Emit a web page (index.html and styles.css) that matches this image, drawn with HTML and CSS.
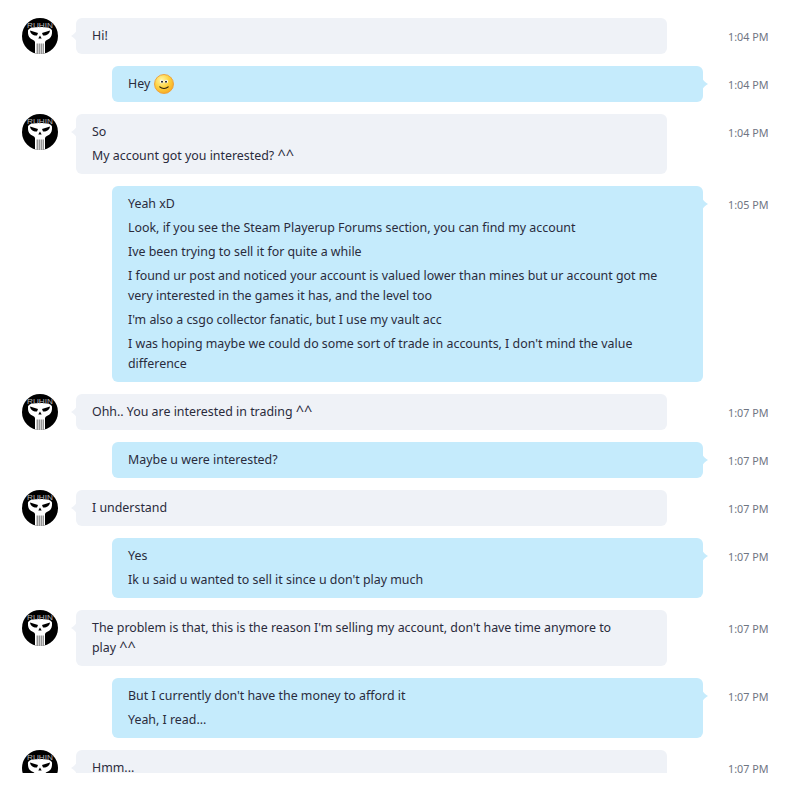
FILE: index.html
```html
<!DOCTYPE html>
<html lang="en">
<head>
<meta charset="utf-8">
<title>Chat</title>
<link rel="stylesheet" href="styles.css">
</head>
<body>
<svg class="defs" width="0" height="0" aria-hidden="true">
  <defs>
    <clipPath id="round"><circle cx="18" cy="18" r="18"/></clipPath>
    <symbol id="avatar" viewBox="0 0 36 36">
      <g clip-path="url(#round)">
        <rect width="36" height="36" fill="#000"/>
        <path d="M6 12.500C6.500 10 11 9 18 9s11.500 1 12 3.500c.3 3.500-.5 6.500-2.500 8-1.500 1.200-4 1.500-4.500 3.500v12H13V24c-.5-2-3-2.300-4.500-3.500-2-1.500-2.800-4.500-2.500-8z" fill="#fff"/>
        <path d="M8 12.500l8 2.500-1 2.500c-3.500.3-6.500-1.200-7-5zM28 12.500l-8 2.500 1 2.500c3.500.3 6.500-1.200 7-5z" fill="#000"/>
        <path d="M18 17.500l-1.700 3h3.400z" fill="#000"/>
        <path d="M15.200 25.500V36M17.200 25.500V36M19.200 25.500V36M21.200 25.500V36" stroke="#555" stroke-width=".9"/>
        <text x="18" y="9.500" class="avatar-text" textLength="26" lengthAdjust="spacingAndGlyphs">RUHIN</text>
      </g>
    </symbol>
    <radialGradient id="smile" cx=".38" cy=".3" r=".8">
      <stop offset="0" stop-color="#fff6a8"/>
      <stop offset=".5" stop-color="#fdd23f"/>
      <stop offset="1" stop-color="#f7a41f"/>
    </radialGradient>
  </defs>
</svg>
<main class="chat">
  <div class="row in">
    <svg class="avatar"><use href="#avatar"/></svg>
    <div class="bubble"><p>Hi!</p></div>
    <time>1:04 PM</time>
  </div>
  <div class="row out">
    <div class="bubble"><p>Hey <svg class="emoji" viewBox="0 0 20 20"><circle cx="10" cy="10" r="9.500" fill="url(#smile)" stroke="#ee9d35" stroke-width=".9"/><ellipse cx="7.800" cy="7.500" rx="1.800" ry="1.800" fill="#fff"/><ellipse cx="12.200" cy="7.500" rx="1.800" ry="1.800" fill="#fff"/><circle cx="8" cy="7.800" r="1" fill="#1c1c1c"/><circle cx="12" cy="7.800" r="1" fill="#1c1c1c"/><path d="M5.800 12.800c2.200 2.200 6.200 2.200 8.400 0" fill="none" stroke="#2a1f0c" stroke-width="1.100" stroke-linecap="round"/></svg></p></div>
    <time>1:04 PM</time>
  </div>
  <div class="row in">
    <svg class="avatar"><use href="#avatar"/></svg>
    <div class="bubble"><p>So</p><p>My account got you interested? <span class="carets">^^</span></p></div>
    <time>1:04 PM</time>
  </div>
  <div class="row out">
    <div class="bubble">
      <p>Yeah xD</p>
      <p>Look, if you see the Steam Playerup Forums section, you can find my account</p>
      <p>Ive been trying to sell it for quite a while</p>
      <p>I found ur post and noticed your account is valued lower than mines but ur account got me very interested in the games it has, and the level too</p>
      <p>I'm also a csgo collector fanatic, but I use my vault acc</p>
      <p>I was hoping maybe we could do some sort of trade in accounts, I don't mind the value difference</p>
    </div>
    <time>1:05 PM</time>
  </div>
  <div class="row in">
    <svg class="avatar"><use href="#avatar"/></svg>
    <div class="bubble"><p>Ohh.. You are interested in trading <span class="carets">^^</span></p></div>
    <time>1:07 PM</time>
  </div>
  <div class="row out">
    <div class="bubble"><p>Maybe u were interested?</p></div>
    <time>1:07 PM</time>
  </div>
  <div class="row in">
    <svg class="avatar"><use href="#avatar"/></svg>
    <div class="bubble"><p>I understand</p></div>
    <time>1:07 PM</time>
  </div>
  <div class="row out">
    <div class="bubble"><p>Yes</p><p>Ik u said u wanted to sell it since u don't play much</p></div>
    <time>1:07 PM</time>
  </div>
  <div class="row in">
    <svg class="avatar"><use href="#avatar"/></svg>
    <div class="bubble"><p>The problem is that, this is the reason I'm selling my account, don't have time anymore to play <span class="carets">^^</span></p></div>
    <time>1:07 PM</time>
  </div>
  <div class="row out">
    <div class="bubble"><p>But I currently don't have the money to afford it</p><p>Yeah, I read...</p></div>
    <time>1:07 PM</time>
  </div>
  <div class="row in">
    <svg class="avatar"><use href="#avatar"/></svg>
    <div class="bubble"><p>Hmm...</p></div>
    <time>1:07 PM</time>
  </div>
</main>
</body>
</html>
```
FILE: styles.css
```css
* { box-sizing: border-box; }
html, body { margin: 0; background: #fff; }
.defs { position: absolute; }
.avatar-text { font: 7.5px "Liberation Sans", sans-serif; fill: #b4b4b4; text-anchor: middle; }
.chat {
  height: 773px;
  overflow: hidden;
  padding: 18px 0 0 22px;
  display: flex;
  flex-direction: column;
  gap: 12px;
  font-family: "Noto Sans", sans-serif;
  font-size: 12.4px;
  line-height: 20px;
  color: #2a2b3c;
}
.row { display: flex; align-items: flex-start; flex: none; }
.avatar { width: 36px; height: 36px; flex: none; margin-right: 18px; }
.out { padding-left: 90px; }
.bubble {
  position: relative;
  width: 591px;
  flex: none;
  padding: 8px 40px 8px 16px;
  border-radius: 6px;
  display: flex;
  flex-direction: column;
  gap: 4px;
}
.in .bubble { background: #eff2f7; }
.out .bubble { background: #c5ebfc; }
.bubble::after {
  content: "";
  position: absolute;
  top: 10px;
  width: 6px;
  height: 16px;
}
.in .bubble::after {
  left: -5px;
  background: #eff2f7;
  clip-path: path("M6 0C6 3 4.500 5 0 8 4.500 11 6 13 6 16Z");
}
.out .bubble::after {
  right: -5px;
  background: #c5ebfc;
  clip-path: path("M0 0C0 3 1.500 5 6 8 1.500 11 0 13 0 16Z");
}
p { margin: 0; }
.carets { font-size: 14.5px; line-height: 1; }
.emoji { width: 20px; height: 20px; vertical-align: -6px; margin-left: 1px; }
time {
  font-size: 10.8px;
  line-height: 14px;
  color: #6f7583;
  margin-top: 12px;
  flex: none;
}
.in time { margin-left: 61px; }
.out time { margin-left: 25px; }
```
